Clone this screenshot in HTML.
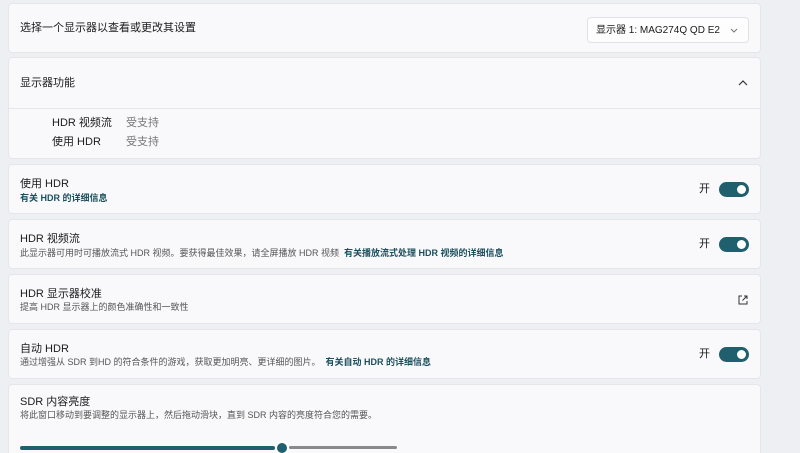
<!DOCTYPE html>
<html><head><meta charset="utf-8"><style>
*{margin:0;padding:0;box-sizing:border-box}
html,body{width:800px;height:453px;overflow:hidden}
body{background:#eeeff3;font-family:"Liberation Sans","Noto Sans CJK SC",sans-serif;color:#1b1b1b;position:relative}
.card{position:absolute;left:8px;width:753px;background:#f9f9fb;border-radius:4px;border:1px solid #e6e6ea}
.t{position:absolute;left:11px;font-size:11px;line-height:13px}
.s{position:absolute;left:11px;font-size:9px;line-height:11px;color:#555}
.lk{color:#1b4f5e;font-weight:bold}
.tog{position:absolute;left:710px;width:30px;height:15px;border-radius:8px;background:#1f5f6e}
.tog:after{content:"";position:absolute;right:3px;top:3px;width:9px;height:9px;border-radius:50%;background:#fff}
.on{position:absolute;left:690px;font-size:11px;line-height:13px}
</style></head><body>
<div class="card" style="top:3px;height:50px">
<div class="t" style="top:18px">选择一个显示器以查看或更改其设置</div>
<div style="position:absolute;left:578px;top:13px;width:162px;height:26px;background:#fdfdfd;border:1px solid #e2e2e6;border-radius:4px;font-size:10px;line-height:13px;padding:6px 0 0 8px;white-space:nowrap">显示器 1: MAG274Q QD E2
<svg style="position:absolute;right:10px;top:10px" width="8" height="5"><path d="M1 1 L4 4 L7 1" stroke="#777" fill="none" stroke-width="1"/></svg></div>
</div>
<div class="card" style="top:57px;height:102px">
<div class="t" style="top:19px">显示器功能</div>
<svg style="position:absolute;left:729px;top:21px" width="10" height="7"><path d="M1 6 L5 2 L9 6" stroke="#333" fill="none" stroke-width="1.2"/></svg>
<div style="position:absolute;left:0;right:0;top:50px;border-top:1px solid #e6e6ea"></div>
<div class="t" style="top:59px;left:43px">HDR 视频流</div><div class="t" style="top:59px;left:117px;color:#777">受支持</div>
<div class="t" style="top:78px;left:43px">使用 HDR</div><div class="t" style="top:78px;left:117px;color:#777">受支持</div>
</div>
<div class="card" style="top:164px;height:50px">
<div class="t" style="top:13px">使用 HDR</div><div class="s lk" style="top:28px">有关 HDR 的详细信息</div>
<div class="on" style="top:18px">开</div><div class="tog" style="top:17px"></div>
</div>
<div class="card" style="top:219px;height:50px">
<div class="t" style="top:13px">HDR 视频流</div><div class="s" style="top:28px">此显示器可用时可播放流式 HDR 视频。要获得最佳效果，请全屏播放 HDR 视频 &nbsp;<span class="lk">有关播放流式处理 HDR 视频的详细信息</span></div>
<div class="on" style="top:18px">开</div><div class="tog" style="top:17px"></div>
</div>
<div class="card" style="top:274px;height:50px">
<div class="t" style="top:13px">HDR 显示器校准</div><div class="s" style="top:27px">提高 HDR 显示器上的颜色准确性和一致性</div>
<svg style="position:absolute;left:729px;top:20px" width="10" height="10"><path d="M4 1H1V9H9V6M6 1H9V4M9 1L4.5 5.5" stroke="#333" fill="none" stroke-width="1"/></svg>
</div>
<div class="card" style="top:329px;height:50px">
<div class="t" style="top:13px">自动 HDR</div><div class="s" style="top:27px">通过增强从 SDR 到HD 的符合条件的游戏，获取更加明亮、更详细的图片。 &nbsp;<span class="lk">有关自动 HDR 的详细信息</span></div>
<div class="on" style="top:18px">开</div><div class="tog" style="top:17px"></div>
</div>
<div class="card" style="top:384px;height:69px;border-bottom:none;border-radius:4px 4px 0 0">
<div class="t" style="top:11px">SDR 内容亮度</div><div class="s" style="top:25px">将此窗口移动到要调整的显示器上，然后拖动滑块，直到 SDR 内容的亮度符合您的需要。</div>
<div style="position:absolute;left:11px;top:61px;width:255px;height:4px;border-radius:2px;background:#1f5f6e"></div>
<div style="position:absolute;left:268px;top:58px;width:10px;height:10px;border-radius:50%;background:#1f5f6e;box-shadow:0 0 0 2px #fff"></div>
<div style="position:absolute;left:280px;top:61px;width:108px;height:3px;border-radius:2px;background:#8a8a8a"></div>
</div>
</body></html>
